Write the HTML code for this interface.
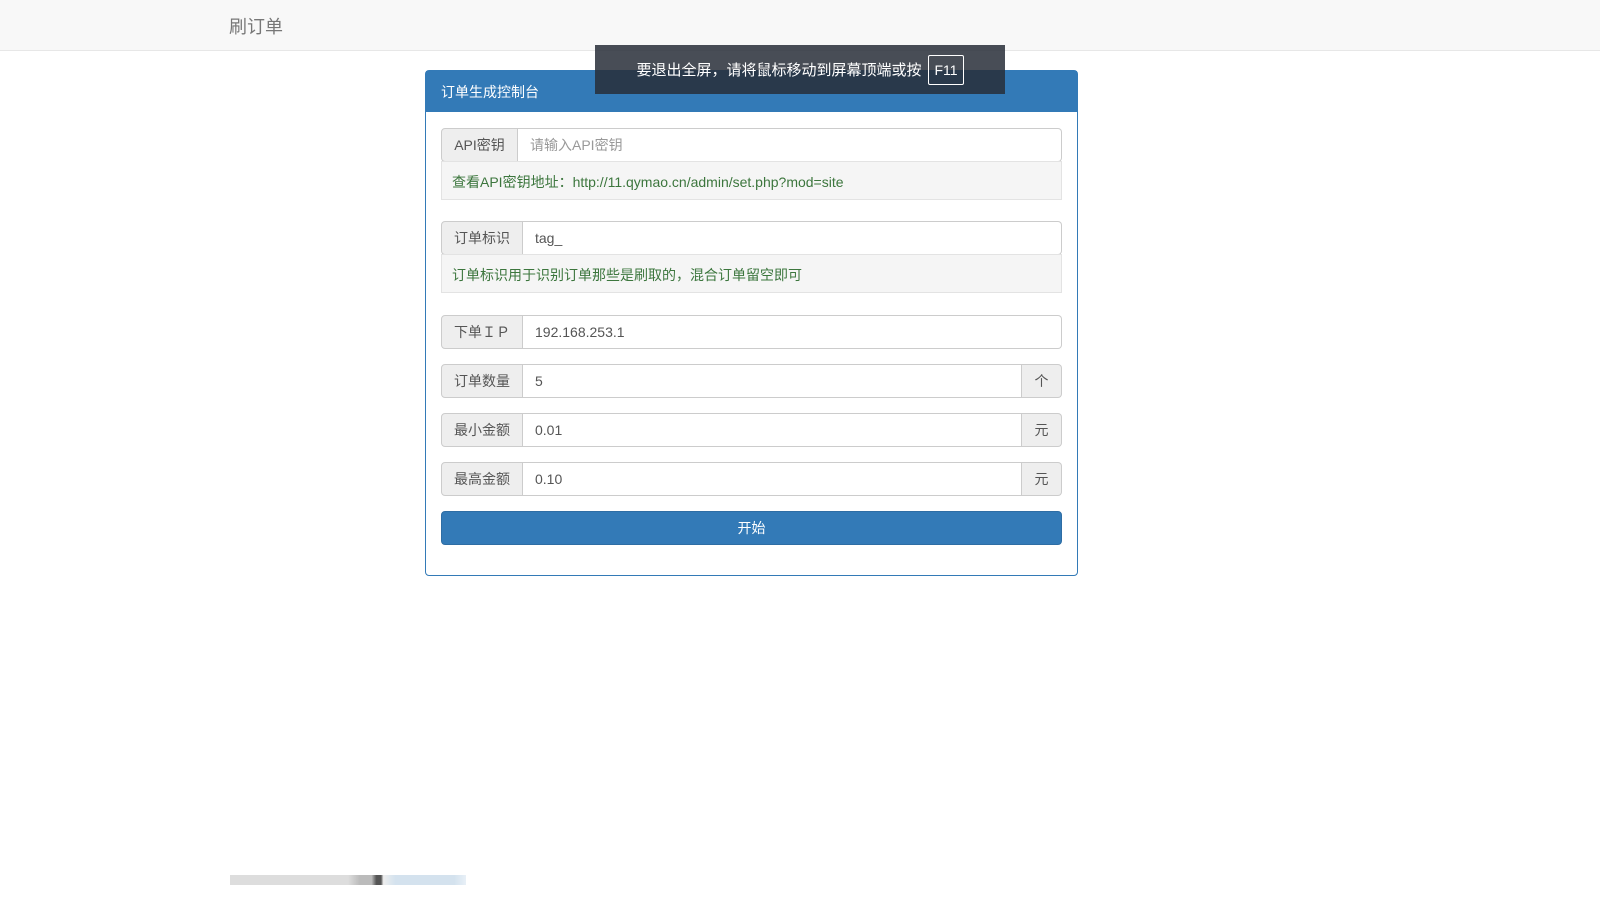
<!DOCTYPE html>
<html><head><meta charset="utf-8"><style>
*{box-sizing:border-box}
body{margin:0;width:1600px;height:900px;background:#fff;font-family:"Liberation Sans","Noto Sans CJK SC",sans-serif;font-size:14px;color:#333;position:relative;overflow:hidden}
.nav{position:absolute;left:0;top:0;width:1600px;height:51px;background:#f8f8f8;border-bottom:1px solid #e7e7e7}
.brand{position:absolute;left:229px;top:13px;font-size:18px;color:#777}
.panel{position:absolute;left:425px;top:70px;width:653px;height:506px;border:1px solid #337ab7;border-radius:4px}
.ph{height:41px;background:#337ab7;color:#fff;padding:11px 15px;font-size:14px}
.row{position:absolute;left:15px;width:621px;height:34px;display:flex}
.ad{background:#eee;border:1px solid #ccc;color:#555;display:flex;align-items:center;justify-content:center;border-radius:4px 0 0 4px}
.in{flex:1;border:1px solid #ccc;border-left:none;padding:0 12px;display:flex;align-items:center;color:#555}
.in.r{border-radius:0 4px 4px 0}
.ad2{width:40px;background:#eee;border:1px solid #ccc;border-left:none;border-radius:0 4px 4px 0;display:flex;align-items:center;justify-content:center;color:#555}
.help{position:absolute;left:15px;width:621px;height:39px;background:#f5f5f5;border:1px solid #e3e3e3;color:#3c763d;padding:10px 10px;font-size:14px}
.btn{position:absolute;left:15px;top:440px;width:621px;height:34px;background:#337ab7;border:1px solid #2e6da4;border-radius:4px;color:#fff;display:flex;align-items:center;justify-content:center}
.ov{position:absolute;left:595px;top:45px;width:410px;height:49px;background:rgba(40,46,56,.85);color:#fff;display:flex;align-items:center;justify-content:center;font-size:15px}
.k{border:1px solid #fff;border-radius:2px;padding:6px 5px;margin-left:7px;font-size:14px}
.foot{position:absolute;left:230px;top:875px;width:236px;height:10px;background:linear-gradient(90deg,#ddd 0,#ddd 50%,#bbb 55%,#bbb 60%,#555 62%,#555 64%,#eee 65%,#d4e2ee 70%,#d4e2ee 95%,#e8f0f7 100%)}
</style></head><body>
<div class="nav"><div class="brand">刷订单</div></div>
<div class="panel">
<div class="ph">订单生成控制台</div>
<div class="row" style="top:57px"><div class="ad" style="width:77px">API密钥</div><div class="in r" style="color:#999">请输入API密钥</div></div>
<div class="help" style="top:90px">查看API密钥地址：http://11.qymao.cn/admin/set.php?mod=site</div>
<div class="row" style="top:150px"><div class="ad" style="width:82px">订单标识</div><div class="in r">tag_</div></div>
<div class="help" style="top:183px">订单标识用于识别订单那些是刷取的，混合订单留空即可</div>
<div class="row" style="top:244px"><div class="ad" style="width:82px">下单ＩＰ</div><div class="in r">192.168.253.1</div></div>
<div class="row" style="top:293px"><div class="ad" style="width:82px">订单数量</div><div class="in">5</div><div class="ad2">个</div></div>
<div class="row" style="top:342px"><div class="ad" style="width:82px">最小金额</div><div class="in">0.01</div><div class="ad2">元</div></div>
<div class="row" style="top:391px"><div class="ad" style="width:82px">最高金额</div><div class="in">0.10</div><div class="ad2">元</div></div>
<div class="btn">开始</div>
</div>
<div class="ov">要退出全屏，请将鼠标移动到屏幕顶端或按<span class="k">F11</span></div>
<div class="foot"></div>
</body></html>
